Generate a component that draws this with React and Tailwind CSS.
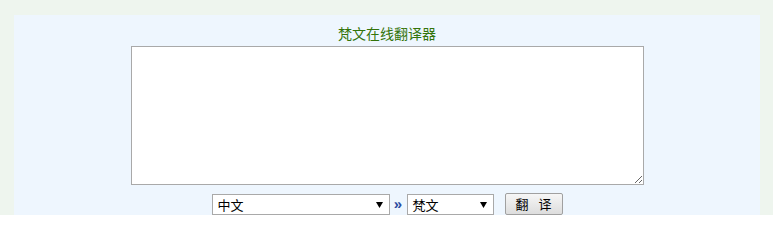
function Arrow() {
  return (
    <svg width="7" height="6" viewBox="0 0 7 6" className="block">
      <path d="M0 0 L7 0 L3.5 6 Z" fill="#000" />
    </svg>
  );
}

export default function App() {
  const cjk = { fontFamily: '"SimSun","Noto Sans CJK SC","Liberation Sans",sans-serif' };
  return (
    <div className="w-[773px] h-[215px] overflow-hidden bg-[#eef5ee] pt-[15px] pl-[14px]" style={cjk}>
      <div className="w-[746px] h-[220px] bg-[#eef6fe] pt-[8px] flex flex-col items-center">
        <div className="h-[20px] leading-[20px] text-[14px] text-[#33740a]">梵文在线翻译器</div>
        <textarea
          className="mt-[3px] block w-[513px] h-[139px] border border-[#a9a9a9] bg-white resize outline-none"
          defaultValue=""
        />
        <div className="mt-[8px] flex items-start">
          <div className="mt-[1px] w-[178px] h-[21px] border border-[#a9a9a9] bg-white flex items-center justify-between pl-[5px] pr-[6px] text-[13px] text-black">
            <span>中文</span>
            <Arrow />
          </div>
          <div className="w-[17px] h-[21px] mt-[1px] flex items-center justify-center text-[15px] text-[#2a4aa0] font-bold" style={{ fontFamily: '"Liberation Sans",sans-serif' }}>»</div>
          <div className="mt-[1px] w-[87px] h-[21px] border border-[#a9a9a9] bg-white flex items-center justify-between pl-[5px] pr-[6px] text-[13px] text-black">
            <span>梵文</span>
            <Arrow />
          </div>
          <button className="ml-[11px] w-[58px] h-[22px] border border-[#a0a0a0] rounded-[2px] bg-gradient-to-b from-[#f6f6f6] to-[#dddddd] text-[13px] text-black flex items-center justify-center gap-[10px]">
            <span>翻</span>
            <span>译</span>
          </button>
        </div>
      </div>
    </div>
  );
}
